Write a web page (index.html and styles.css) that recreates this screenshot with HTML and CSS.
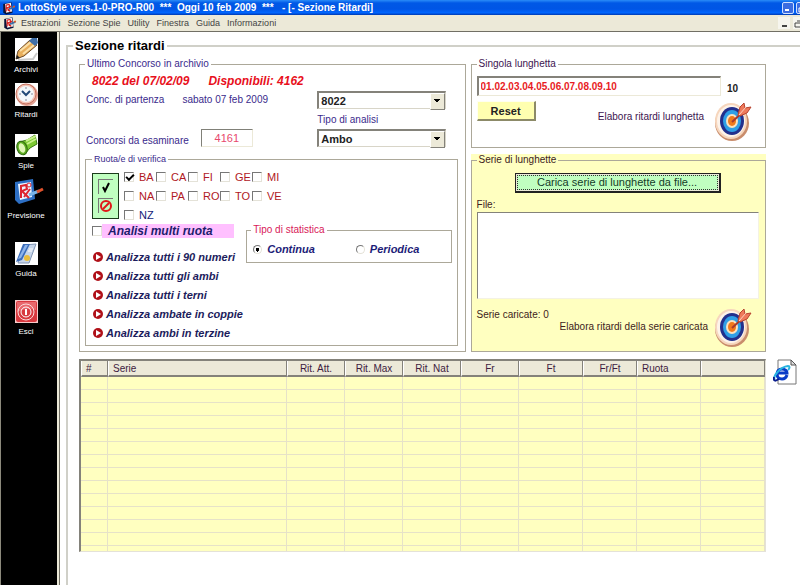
FILE: index.html
```
<!DOCTYPE html>
<html lang="it">
  <head>
    <meta charset="utf-8">
    <title>LottoStyle - Sezione Ritardi</title>
    <link rel="stylesheet" href="styles.css">
  </head>
  <body>
    <!-- shared icons -->
    <svg class="defs" width="0" height="0" aria-hidden="true">
      <symbol id="app-icon" viewBox="0 0 24 24">
        <path d="M3 5l14-3 2 18-11 3-5-3z" fill="#0a1438" />
        <path d="M6 5l10-2 2 15-10 2z" fill="#fff" />
        <path d="M8 6v12M8 7l5-1 1 4-5 2 6 6M16 8l-5 9" stroke="#d8201c" stroke-width="2" fill="none" />
        <path d="M13 14l9-4" stroke="#3a6ea8" stroke-width="3" />
        <path d="M20 10l3-1" stroke="#e05a20" stroke-width="3" />
      </symbol>
      <symbol id="target" viewBox="0 0 38 40">
        <ellipse cx="18" cy="22" rx="17" ry="18" fill="#c98d6c" />
        <ellipse cx="17" cy="20" rx="16" ry="18" fill="#f6d6bd" />
        <ellipse cx="17" cy="20" rx="14" ry="16" fill="#fdf3ea" />
        <ellipse cx="18" cy="20" rx="12" ry="14" fill="#23308c" />
        <ellipse cx="18" cy="20" rx="9" ry="11" fill="#2f9fe6" />
        <ellipse cx="18" cy="20" rx="6" ry="7" fill="#fbe3c0" />
        <ellipse cx="18" cy="20" rx="4" ry="5" fill="#f07a1c" />
        <path d="M18 21L32 8" stroke="#a93a2c" stroke-width="2" />
        <path d="M24 14l2-8 4-4 1 5 6-1-4 6-7 3z" fill="#ee7a5c" stroke="#b8432f" stroke-width="1" />
        <path d="M25 14l7-8" stroke="#ffd2bf" stroke-width="1" />
      </symbol>
      <symbol id="play" viewBox="0 0 10 10">
        <circle cx="5" cy="5" r="5" fill="#b01018" />
        <path d="M3 2l5 3-5 3z" fill="#fff" />
      </symbol>
    </svg>

    <header class="titlebar">
      <svg class="app-icon"><use href="#app-icon" /></svg>
      <h1>LottoStyle vers.1-0-PRO-R00  ***  Oggi 10 feb 2009  ***   - [- Sezione Ritardi]</h1>
      <div class="window-buttons">
        <button type="button" aria-label="Riduci a icona"><svg viewBox="0 0 10 10"><path d="M2 7h4" stroke="#fff" stroke-width="2" /></svg></button>
        <button type="button" aria-label="Ripristina"><svg viewBox="0 0 10 10"><path d="M4 2h5v4M2 5h5v4H2z" stroke="#fff" fill="none" /></svg></button>
      </div>
    </header>

    <nav class="menubar">
      <svg class="app-icon"><use href="#app-icon" /></svg>
      <a href="#">Estrazioni</a>
      <a href="#">Sezione Spie</a>
      <a href="#">Utility</a>
      <a href="#">Finestra</a>
      <a href="#">Guida</a>
      <a href="#">Informazioni</a>
      <div class="child-buttons">
        <button type="button" aria-label="Riduci a icona"><svg viewBox="0 0 12 12"><path d="M4 9h5" stroke="#444" stroke-width="2" /></svg></button>
        <button type="button" aria-label="Ripristina"><svg viewBox="0 0 12 12"><path d="M4 4h6v4M2 6h6v4H2z" stroke="#444" fill="none" /></svg></button>
      </div>
    </nav>

    <div class="shell">
      <aside class="sidebar">
        <button type="button" class="tool">
          <svg viewBox="0 0 23 23">
            <path d="M0 0h23v23H0z" fill="#fff" />
            <path d="M3 22l15-1 4-6" stroke="#ccc" stroke-width="2" fill="none" />
            <path d="M1 21l2-8L15 2l7 5L9 18z" fill="#e8ae5c" stroke="#6e4c28" stroke-width="1" />
            <path d="M5 13L16 4M8 16L19 7" stroke="#fbe0a8" stroke-width="2" />
            <path d="M14 3l3-3 5 0 1 5-3 3z" fill="#3f6fa8" />
            <path d="M1 21l1-4 3 3z" fill="#222" />
          </svg>
          Archivi
        </button>
        <button type="button" class="tool">
          <svg viewBox="0 0 23 23">
            <path d="M0 0h23v23H0z" fill="#fff" />
            <circle cx="12" cy="12" r="11" fill="#e2a193" />
            <circle cx="11" cy="11" r="10" fill="#f3c3b6" stroke="#c5705e" />
            <circle cx="11" cy="11" r="8" fill="#f4f8fb" />
            <path d="M11 4v2M11 16v2M4 11h2M16 11h2" stroke="#889" />
            <path d="M7 8l4 4 4-4" stroke="#234a78" stroke-width="2" fill="none" />
          </svg>
          Ritardi
        </button>
        <button type="button" class="tool spaced">
          <svg viewBox="0 0 23 23">
            <path d="M0 0h23v23H0z" fill="#fff" />
            <path d="M4 8l8-2 8-5 2 9-7 4-6 7z" fill="#7cc832" stroke="#3d7a14" />
            <path d="M11 7l10-5M12 10l9-5" stroke="#c9f28c" stroke-width="2" />
            <ellipse cx="7" cy="14" rx="5" ry="7" transform="rotate(-20 7 14)" fill="#5fae22" stroke="#2f6a10" />
            <ellipse cx="7" cy="14" rx="3" ry="5" transform="rotate(-20 7 14)" fill="#dff5b6" />
          </svg>
          Spie
        </button>
        <button type="button" class="tool">
          <svg class="wide" viewBox="0 0 30 28">
            <path d="M1 3L19 0l2 20-16 5-4-4z" fill="#2d6fc4" />
            <path d="M4 5l13-2 1 15-12 3z" fill="#eaf3ff" />
            <path d="M7 6v13M7 7l5-1 1 4-5 2 7 7M16 10l-6 8" stroke="#dc2430" stroke-width="2" fill="none" />
            <circle cx="15" cy="6" r="2" stroke="#dc2430" fill="none" />
            <path d="M15 16l10-4" stroke="#79b4e8" stroke-width="3" />
            <path d="M23 13l6-3" stroke="#e0522c" stroke-width="3" />
          </svg>
          Previsione
        </button>
        <button type="button" class="tool far">
          <svg viewBox="0 0 23 23">
            <path d="M0 0h23v23H0z" fill="#fff" />
            <path d="M9 3l12-1-7 19H3z" fill="#c7d6ea" stroke="#8095b5" />
            <path d="M8 2h7L7 18l-6 2z" fill="#3a6cba" />
            <path d="M10 3h3L6 16l-3 1z" fill="#8db4ea" />
            <path d="M14 7h4M13 9h4" stroke="#fff" />
            <circle cx="12" cy="16" r="3" fill="#e9bd3c" />
          </svg>
          Guida
        </button>
        <button type="button" class="tool far">
          <svg viewBox="0 0 23 23">
            <path d="M0 0h23v23H0z" fill="#f7c9c9" />
            <rect x="1" y="1" width="21" height="21" rx="2" fill="#d8393f" />
            <path d="M2 2h19v8Q11 7 2 12z" fill="#e8686c" />
            <circle cx="11" cy="12" r="8" fill="none" stroke="#fbdada" />
            <circle cx="11" cy="12" r="5" fill="none" stroke="#fff" />
            <path d="M11 9v6" stroke="#fff" stroke-width="2" />
          </svg>
          Esci
        </button>
      </aside>

      <main>
        <fieldset class="section">
          <legend>Sezione ritardi</legend>

          <div class="panels">
            <fieldset class="group archive">
              <legend>Ultimo Concorso in archivio</legend>
              <p class="last-draw"><span>8022 del 07/02/09</span><span>Disponibili: 4162</span></p>

              <div class="draw-form">
                <div class="draw-left">
                  <div class="start-row">
                    <label for="start">Conc. di partenza</label>
                    <span>sabato 07 feb 2009</span>
                  </div>
                  <div class="count-row">
                    <label for="count">Concorsi da esaminare</label>
                    <input type="text" id="count" value="4161">
                  </div>
                </div>
                <div class="draw-right">
                  <span class="combo"><select id="start"><option>8022</option></select></span>
                  <label for="analysis">Tipo di analisi</label>
                  <span class="combo"><select id="analysis"><option>Ambo</option></select></span>
                </div>
              </div>

              <fieldset class="group wheels">
                <legend>Ruota/e di verifica</legend>
                <div class="wheel-row">
                  <div class="select-all">
                    <button type="button" aria-label="Seleziona tutte"><svg viewBox="0 0 12 12"><path d="M3 6l2 4 4-8" stroke="#000" stroke-width="2" fill="none" /></svg></button>
                    <button type="button" aria-label="Deseleziona tutte"><svg viewBox="0 0 12 12"><circle cx="6" cy="6" r="5" stroke="#e01818" stroke-width="2" fill="none" /><path d="M3 9l6-6" stroke="#e01818" stroke-width="2" /></svg></button>
                  </div>
                  <div class="wheel-grid">
                    <label><input type="checkbox" checked>BA</label>
                    <label><input type="checkbox">CA</label>
                    <label><input type="checkbox">FI</label>
                    <label><input type="checkbox">GE</label>
                    <label><input type="checkbox">MI</label>
                    <label><input type="checkbox">NA</label>
                    <label><input type="checkbox">PA</label>
                    <label><input type="checkbox">RO</label>
                    <label><input type="checkbox">TO</label>
                    <label><input type="checkbox">VE</label>
                    <label class="national"><input type="checkbox">NZ</label>
                  </div>
                </div>

                <div class="analysis-row">
                  <div>
                    <label class="multi"><input type="checkbox"><span>Analisi multi ruota</span></label>
                    <ul class="actions">
                      <li><a href="#"><svg><use href="#play" /></svg>Analizza tutti i 90 numeri</a></li>
                      <li><a href="#"><svg><use href="#play" /></svg>Analizza tutti gli ambi</a></li>
                      <li><a href="#"><svg><use href="#play" /></svg>Analizza tutti i terni</a></li>
                      <li><a href="#"><svg><use href="#play" /></svg>Analizza ambate in coppie</a></li>
                      <li><a href="#"><svg><use href="#play" /></svg>Analizza ambi in terzine</a></li>
                    </ul>
                  </div>
                  <fieldset class="group stat">
                    <legend>Tipo di statistica</legend>
                    <label><input type="radio" name="stat" checked>Continua</label>
                    <label><input type="radio" name="stat">Periodica</label>
                  </fieldset>
                </div>
              </fieldset>
            </fieldset>

            <div class="side">
              <fieldset class="group single">
                <legend>Singola lunghetta</legend>
                <div class="numbers-row">
                  <input type="text" aria-label="Singola lunghetta" value="01.02.03.04.05.06.07.08.09.10">
                  <output>10</output>
                </div>
                <div class="run-row">
                  <button type="button" class="reset">Reset</button>
                  <label for="run-single">Elabora ritardi lunghetta</label>
                  <button type="button" id="run-single" class="run"><svg><use href="#target" /></svg></button>
                </div>
              </fieldset>

              <div class="series-box">
                <fieldset class="group series">
                  <legend>Serie di lunghette</legend>
                  <button type="button" class="load"><span>Carica serie di lunghette da file...</span></button>
                  <label class="file-label" for="files">File:</label>
                  <textarea id="files"></textarea>
                  <div class="series-foot">
                    <p>Serie caricate: 0</p>
                    <label for="run-series">Elabora ritardi della serie caricata</label>
                    <button type="button" id="run-series" class="run"><svg><use href="#target" /></svg></button>
                  </div>
                </fieldset>
              </div>
            </div>
          </div>

          <div class="results">
            <table>
              <colgroup>
                <col class="c-num"><col><col class="c-mid"><col class="c-mid"><col class="c-mid"><col class="c-mid"><col class="c-wide"><col class="c-ratio"><col class="c-wide"><col class="c-wide">
              </colgroup>
              <thead>
                <tr><th class="left">#</th><th class="left">Serie</th><th>Rit. Att.</th><th>Rit. Max</th><th>Rit. Nat</th><th>Fr</th><th>Ft</th><th>Fr/Ft</th><th class="left">Ruota</th><th></th></tr>
              </thead>
              <tbody>
                <tr><td></td><td></td><td></td><td></td><td></td><td></td><td></td><td></td><td></td><td></td></tr>
                <tr><td></td><td></td><td></td><td></td><td></td><td></td><td></td><td></td><td></td><td></td></tr>
                <tr><td></td><td></td><td></td><td></td><td></td><td></td><td></td><td></td><td></td><td></td></tr>
                <tr><td></td><td></td><td></td><td></td><td></td><td></td><td></td><td></td><td></td><td></td></tr>
                <tr><td></td><td></td><td></td><td></td><td></td><td></td><td></td><td></td><td></td><td></td></tr>
                <tr><td></td><td></td><td></td><td></td><td></td><td></td><td></td><td></td><td></td><td></td></tr>
                <tr><td></td><td></td><td></td><td></td><td></td><td></td><td></td><td></td><td></td><td></td></tr>
                <tr><td></td><td></td><td></td><td></td><td></td><td></td><td></td><td></td><td></td><td></td></tr>
                <tr><td></td><td></td><td></td><td></td><td></td><td></td><td></td><td></td><td></td><td></td></tr>
                <tr><td></td><td></td><td></td><td></td><td></td><td></td><td></td><td></td><td></td><td></td></tr>
                <tr><td></td><td></td><td></td><td></td><td></td><td></td><td></td><td></td><td></td><td></td></tr>
                <tr><td></td><td></td><td></td><td></td><td></td><td></td><td></td><td></td><td></td><td></td></tr>
                <tr><td></td><td></td><td></td><td></td><td></td><td></td><td></td><td></td><td></td><td></td></tr>
                <tr class="partial"><td></td><td></td><td></td><td></td><td></td><td></td><td></td><td></td><td></td><td></td></tr>
              </tbody>
            </table>
            <button type="button" class="export" aria-label="Apri nel browser">
              <svg viewBox="0 0 24 26">
                <path d="M5 1h13l5 5v19H5z" fill="#fff" stroke="#777" />
                <path d="M18 1v5h5z" fill="#ddd" stroke="#555" />
                <path d="M14 16c-1 3-3 4-5 4-3 0-5-2-5-5s2-5 5-5 5 2 5 4H5" fill="none" stroke="#0a3cc8" stroke-width="3" />
                <path d="M2 21c-3-3 5-13 13-14 2 0 2 2 0 4" fill="none" stroke="#28b4e0" stroke-width="2" />
                <path d="M1 18c-1 5 2 4 5 2" fill="none" stroke="#0a1c8c" stroke-width="2" />
              </svg>
            </button>
          </div>
        </fieldset>
      </main>
    </div>
  </body>
</html>
```
FILE: styles.css
```
* {
  box-sizing: border-box;
}

body {
  display: flex;
  flex-direction: column;
  min-height: 100vh;
  margin: 0;
  font-family: "Liberation Sans", Arial, sans-serif;
  font-size: 10px;
  line-height: 12px;
  color: #3a2a8c;
  background-color: #fff;
}

button,
input,
select,
textarea {
  margin: 0;
  padding: 0;
  border: 0;
  border-radius: 0;
  font: inherit;
  color: inherit;
  background: none;
}

fieldset,
legend,
p,
ul {
  min-width: 0;
  margin: 0;
  padding: 0;
}

svg {
  display: block;
}

.defs {
  position: absolute;
}

.app-icon {
  flex: none;
  width: 15px;
  height: 14px;
}

/* title and menu */
.titlebar {
  display: flex;
  align-items: center;
  height: 15px;
  padding-left: 1px;
  background: linear-gradient(#2a8cf8, #0058e6 20%, #0055e5 60%, #0066ff 85%, #0038b0);
  color: #fff;
}

.titlebar h1 {
  margin: 0 0 0 2px;
  font-size: 10px;
  line-height: 15px;
  white-space: pre;
}

.window-buttons {
  display: flex;
  gap: 2px;
  width: 18px;
  margin-left: auto;
  overflow: hidden;
}

.window-buttons button {
  flex: none;
  width: 12px;
  height: 12px;
  border: 1px solid #cfe0ff;
  border-radius: 2px;
  background-color: #3c6ce0;
}

.menubar {
  display: flex;
  align-items: center;
  gap: 7px;
  height: 17px;
  padding-left: 2px;
  border-bottom: 1px solid #716f64;
  background-color: #ece9d8;
  font-size: 9px;
}

.menubar .app-icon {
  margin-right: -3px;
}

.menubar a {
  color: #444;
  text-decoration: none;
}

.child-buttons {
  display: flex;
  gap: 3px;
  width: 22px;
  margin-left: auto;
  overflow: hidden;
}

.child-buttons button {
  flex: none;
  width: 12px;
  height: 12px;
  background-color: #f6f5ee;
}

.shell {
  display: flex;
  flex: 1;
}

.sidebar {
  flex: none;
  width: 60px;
  padding: 6px 9px 0 1px;
  border-left: 1px solid #8c8a7c;
  border-right: 1px solid #716f64;
  background: linear-gradient(to left, #ece9d8 2px, #000 2px);
}

.tool {
  display: flex;
  flex-direction: column;
  align-items: center;
  gap: 4px;
  width: 100%;
  margin-bottom: 9px;
  color: #fff;
  font-size: 8px;
  line-height: 9px;
}

.tool svg {
  width: 23px;
  height: 23px;
}

.tool svg.wide {
  width: 30px;
  height: 28px;
  margin-left: 6px;
}

.tool.spaced {
  margin-top: 15px;
}

.tool.far {
  margin-top: 22px;
}

/* group boxes */
main {
  flex: 1;
  min-width: 0;
  padding: 6px 0 0 6px;
}

.section {
  height: 100%;
  padding-left: 11px;
  border: 2px solid #d0d0c8;
  border-width: 2px 0 0 2px;
}

.section > legend {
  margin-left: -6px;
  padding: 0 2px;
  color: #000;
  font-size: 13px;
  font-weight: bold;
  line-height: 16px;
}

.panels {
  display: grid;
  grid-template-columns: 386fr 295fr;
  gap: 5px;
  margin-right: 34px;
  padding-top: 4px;
}

.group {
  border: 1px solid #aca899;
}

.group > legend {
  margin-left: 4px;
  padding: 0 2px;
  line-height: 12px;
}

.archive {
  padding: 0 7px 5px 5px;
}

.archive > legend,
.side .group > legend {
  margin-left: 4px;
}

.last-draw {
  display: flex;
  gap: 19px;
  padding: 5px 7px 4px;
  color: #e8101c;
  font-size: 12px;
  font-style: italic;
  font-weight: bold;
}

.archive > legend,
.side .group > legend {
  margin-left: 0;
}

.draw-form {
  display: grid;
  grid-template-columns: 231fr 128fr;
  padding: 0 12px 0 1px;
}

.start-row {
  display: flex;
  align-items: center;
  gap: 18px;
  height: 18px;
  margin-bottom: 20px;
}

.count-row {
  display: flex;
  align-items: flex-end;
  gap: 12px;
  height: 18px;
}

.count-row input {
  width: 52px;
  height: 18px;
  border: 1px solid #ece9d8;
  border-top-color: #808078;
  border-left-color: #808078;
  color: #e8486c;
  font-size: 11px;
  text-align: center;
}

.draw-right label {
  display: block;
  line-height: 12px;
  padding: 5px 0 3px;
}

.combo {
  display: block;
  position: relative;
}

.combo select {
  display: block;
  width: 100%;
  height: 18px;
  padding-left: 2px;
  appearance: none;
  border: 1px solid #d8d5c8;
  border-top: 2px solid #84827a;
  border-left: 2px solid #84827a;
  background-color: #fff;
  color: #222;
  font-size: 11px;
  font-weight: bold;
}

.combo::after {
  content: "";
  position: absolute;
  top: 2px;
  right: 1px;
  width: 13px;
  height: 15px;
  border: 1px solid #fff;
  border-right-color: #84827a;
  border-bottom-color: #84827a;
  background: conic-gradient(from 315deg at 50% 65%, #000 90deg, transparent 0) center / 6px 5px no-repeat #ece9d8;
}

/* wheels */
.wheels {
  margin-top: 6px;
  padding: 0 5px 3px 6px;
}

.wheels > legend {
  margin-left: 0;
  font-size: 9px;
}

.wheel-row {
  display: flex;
  gap: 5px;
  padding-top: 2px;
}

.select-all {
  display: flex;
  flex-direction: column;
  align-items: center;
  justify-content: space-evenly;
  width: 27px;
  height: 46px;
  margin-top: 6px;
  border: 1px solid #1c3c1c;
  background-color: #c0ffc0;
}

.select-all button {
  width: 15px;
  height: 15px;
  padding: 1px;
  border-top: 1px solid #777;
  border-left: 1px solid #777;
}

.select-all svg {
  width: 12px;
  height: 12px;
}

.wheel-grid {
  display: grid;
  grid-template-columns: repeat(5, 32px);
  grid-auto-rows: 19px;
  align-items: center;
  font-size: 11px;
  color: #b01824;
}

.wheel-grid label {
  display: flex;
  align-items: center;
  gap: 5px;
}

.wheel-grid .national {
  color: #141c78;
}

input[type="checkbox"] {
  flex: none;
  width: 10px;
  height: 10px;
  appearance: none;
  border: 1px solid #e4e2d8;
  border-top-color: #777;
  border-left-color: #777;
  background-color: #fff;
}

input[type="checkbox"]:checked::before {
  content: "";
  display: block;
  width: 6px;
  height: 3px;
  margin: 1px;
  border: 2px solid #000;
  border-width: 0 0 2px 2px;
  transform: rotate(-45deg);
}

.analysis-row {
  display: grid;
  grid-template-columns: 154fr 205fr;
  align-items: start;
}

.multi {
  display: flex;
  align-items: center;
  height: 14px;
  margin-right: 12px;
}

.multi span {
  flex: 1;
  padding-left: 6px;
  background-color: #ffc0ff;
  color: #1c1c6c;
  font-size: 12px;
  font-style: italic;
  font-weight: bold;
  line-height: 14px;
}

.actions {
  padding: 9px 0 0 1px;
  list-style: none;
}

.actions a {
  display: flex;
  align-items: center;
  gap: 3px;
  height: 19px;
  color: #1c1c5c;
  font-size: 11px;
  font-style: italic;
  font-weight: bold;
  text-decoration: none;
  white-space: nowrap;
}

.actions svg {
  flex: none;
  width: 10px;
  height: 10px;
}

.stat {
  display: grid;
  grid-template-columns: 103fr 89fr;
  height: 39px;
  padding: 5px 6px 0;
}

.stat > legend {
  margin-left: -2px;
  color: #d81858;
}

.stat label {
  display: flex;
  align-items: center;
  gap: 5px;
  height: 16px;
  color: #1c1c78;
  font-size: 11px;
  font-style: italic;
  font-weight: bold;
}

input[type="radio"] {
  width: 9px;
  height: 9px;
  appearance: none;
  border: 1px solid #e4e2d8;
  border-top-color: #777;
  border-left-color: #777;
  border-radius: 50%;
  background-color: #fff;
}

input[type="radio"]:checked {
  background-image: radial-gradient(circle, #000 2px, transparent 2px);
}

/* right column */
.side {
  display: flex;
  flex-direction: column;
  gap: 6px;
  color: #3c1450;
}

.single {
  height: 90px;
  padding: 6px 13px 0 5px;
}

.numbers-row {
  display: flex;
  gap: 6px;
}

.numbers-row input {
  flex: 1;
  min-width: 0;
  height: 20px;
  padding-left: 2px;
  border: 1px solid #ece9d8;
  border-top: 2px solid #84827a;
  border-left: 2px solid #84827a;
  color: #e81c24;
  font-weight: bold;
}

.numbers-row output {
  width: 25px;
  padding-top: 7px;
  color: #222;
  font-weight: bold;
}

.run-row {
  display: flex;
  align-items: center;
  margin-top: 5px;
}

.run-row .reset {
  align-self: flex-start;
  width: 59px;
  height: 20px;
  margin-right: auto;
  border: 1px solid #fffff0;
  border-right: 2px solid #8c8a68;
  border-bottom: 2px solid #8c8a68;
  background-color: #ffffb0;
  color: #222;
  font-size: 11px;
  font-weight: bold;
}

.run-row label {
  margin: 0 10px 8px 0;
}

.run svg {
  width: 38px;
  height: 40px;
}

.series-box {
  flex: 1;
  background-color: #ffffc0;
}

.series {
  display: flex;
  flex-direction: column;
  height: 100%;
  padding: 7px 6px 0 5px;
  color: #401c1c;
}

.load {
  width: 206px;
  height: 20px;
  margin-left: 38px;
  padding: 1px;
  border: 1px solid #222;
  border-right-width: 2px;
  border-bottom-width: 2px;
  background-color: #ece9d8;
  color: #143c28;
  font-size: 11px;
}

.load span {
  display: block;
  border: 1px dotted #333;
  background-color: #c0ffc0;
  line-height: 13px;
}

.file-label {
  margin: 6px 0 1px;
}

.series textarea {
  display: block;
  width: 100%;
  height: 87px;
  border: 1px solid #f4f2e4;
  border-top: 1px solid #84827a;
  border-left: 1px solid #84827a;
  background-color: #fff;
  resize: none;
}

.series-foot {
  display: flex;
  align-items: center;
  margin-top: 8px;
  padding-right: 7px;
}

.series-foot p {
  align-self: flex-start;
  width: 83px;
  margin-top: 2px;
  margin-right: auto;
  white-space: nowrap;
}

.series-foot label {
  margin-right: 6px;
  white-space: nowrap;
}

/* results */
.results {
  display: grid;
  grid-template-columns: 1fr 24px;
  align-items: start;
  gap: 7px;
  margin: 7px 3px 0 0;
}

.results table {
  width: 100%;
  table-layout: fixed;
  border-spacing: 0;
  border: 1px solid #e4e2d8;
  border-top: 2px solid #84827a;
  border-left: 2px solid #84827a;
  background-color: #ffffc0;
}

.c-num {
  width: 27px;
}

.c-mid {
  width: 58px;
}

.c-ratio {
  width: 54px;
}

.c-wide {
  width: 64px;
}

.results th {
  height: 16px;
  padding: 2px 0 0;
  border-right: 1px solid #84827a;
  border-bottom: 2px solid #84827a;
  border-left: 1px solid #fff;
  background-color: #ece9d8;
  color: #401c40;
  font-weight: normal;
}

.results .left {
  padding-left: 4px;
  text-align: left;
}

.results td {
  height: 13px;
  padding: 0;
  border-right: 1px solid #e6e2c8;
  border-bottom: 1px solid #e6e2c8;
}

.results .partial td {
  height: 5px;
  border-bottom: 0;
}

.export svg {
  width: 24px;
  height: 26px;
}
```
